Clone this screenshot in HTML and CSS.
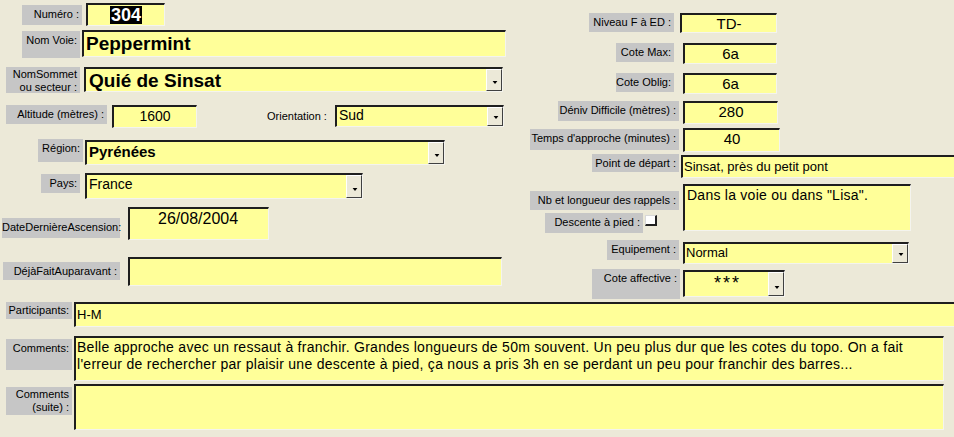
FILE: index.html
```html
<!DOCTYPE html>
<html lang="fr">
<head>
<meta charset="utf-8">
<title>Voie</title>
<link rel="stylesheet" href="styles.css">
</head>
<body>
<div class="form">
  <div class="top">
    <div class="left">
      <div class="row r-num">
        <div class="lab">Numéro :</div>
        <div class="fld center"><span class="sel">304</span></div>
      </div>
      <div class="row r-voie">
        <div class="lab">Nom Voie:</div>
        <div class="fld big">Peppermint</div>
      </div>
      <div class="row r-sommet">
        <div class="lab two">NomSommet<br>ou secteur :</div>
        <div class="fld combo big"><span class="val">Quié de Sinsat</span><span class="dd"></span></div>
      </div>
      <div class="row r-alt">
        <div class="lab">Altitude (mètres) :</div>
        <div class="fld center num">1600</div>
        <div class="plain">Orientation :</div>
        <div class="fld combo med"><span class="val">Sud</span><span class="dd"></span></div>
      </div>
      <div class="row r-reg">
        <div class="lab">Région:</div>
        <div class="fld combo bold15"><span class="val">Pyrénées</span><span class="dd"></span></div>
      </div>
      <div class="row r-pays">
        <div class="lab">Pays:</div>
        <div class="fld combo med"><span class="val">France</span><span class="dd"></span></div>
      </div>
      <div class="row r-date">
        <div class="lab">DateDernièreAscension:</div>
        <div class="fld date">26/08/2004</div>
      </div>
      <div class="row r-deja">
        <div class="lab">DéjàFaitAuparavant :</div>
        <div class="fld"></div>
      </div>
    </div>
    <div class="right">
      <div class="row q-niv">
        <div class="lab">Niveau F à ED :</div>
        <div class="fld center num">TD-</div>
      </div>
      <div class="row q-max">
        <div class="lab">Cote Max:</div>
        <div class="fld center num">6a</div>
      </div>
      <div class="row q-obl">
        <div class="lab">Cote Oblig:</div>
        <div class="fld center num">6a</div>
      </div>
      <div class="row q-den">
        <div class="lab">Déniv Difficile (mètres) :</div>
        <div class="fld center num">280</div>
      </div>
      <div class="row q-tps">
        <div class="lab">Temps d'approche (minutes) :</div>
        <div class="fld center num">40</div>
      </div>
      <div class="row q-pt">
        <div class="lab">Point de départ :</div>
        <div class="fld small">Sinsat, près du petit pont</div>
      </div>
      <div class="row q-rap">
        <div class="rap-side">
          <div class="lab rap-lab">Nb et longueur des rappels :</div>
          <div class="desc">
            <div class="lab">Descente à pied :</div>
            <span class="chk"></span>
          </div>
        </div>
        <div class="fld med rap">Dans la voie ou dans "Lisa".</div>
      </div>
      <div class="row q-equ">
        <div class="lab">Equipement :</div>
        <div class="fld combo small"><span class="val">Normal</span><span class="dd"></span></div>
      </div>
      <div class="row q-aff">
        <div class="lab">Cote affective :</div>
        <div class="fld combo small"><span class="val stars">***</span><span class="dd"></span></div>
      </div>
    </div>
  </div>
  <div class="bottom">
    <div class="row b-part">
      <div class="lab">Participants:</div>
      <div class="fld small">H-M</div>
    </div>
    <div class="row b-com">
      <div class="lab">Comments:</div>
      <div class="fld memo">Belle approche avec un ressaut à franchir. Grandes longueurs de 50m souvent. Un peu plus dur que les cotes du topo. On a fait<br>l'erreur de rechercher par plaisir une descente à pied, ça nous a pris 3h en se perdant un peu pour franchir des barres...</div>
    </div>
    <div class="row b-suite">
      <div class="lab two">Comments<br>(suite) :</div>
      <div class="fld"></div>
    </div>
  </div>
</div>
</body>
</html>
```

FILE: styles.css
```css
html, body {
  margin: 0;
  padding: 0;
  background: #ece9d8;
  overflow: hidden;
}
.form {
  width: 954px;
  height: 437px;
  font-family: "Liberation Sans", Arial, sans-serif;
  color: #000;
}
.top {
  display: flex;
  height: 297px;
}
.left {
  width: 520px;
  flex: none;
}
.right {
  flex: 1;
}
.row {
  display: flex;
  align-items: flex-start;
}
.lab {
  flex: none;
  box-sizing: border-box;
  background: #c6c6c6;
  font-size: 11px;
  line-height: 13px;
  text-align: right;
  padding: 3px 3px 0 0;
  white-space: nowrap;
}
.lab.two {
  padding-top: 1px;
}
.plain {
  font-size: 11px;
  line-height: 13px;
  white-space: nowrap;
}
.fld {
  flex: none;
  box-sizing: border-box;
  background: #ffff99;
  border-style: solid;
  border-width: 2px 1px 1px 2px;
  border-color: #1e1e1e #f4f4ee #f4f4ee #1e1e1e;
  padding: 0 2px;
  font-size: 14px;
  line-height: 17px;
  white-space: nowrap;
  overflow: hidden;
}
.center { text-align: center; }
.num { font-size: 15px; line-height: 17px; }
.big { font-size: 19px; font-weight: bold; line-height: 22px; padding-top: 1px; }
.med { font-size: 14px; line-height: 17px; }
.small { font-size: 13px; line-height: 16px; padding-left: 1px; }
.bold15 { font-size: 15px; font-weight: bold; line-height: 18px; }
.combo {
  display: flex;
  padding: 0;
}
.combo .val {
  flex: 1;
  padding-left: 2px;
  overflow: hidden;
}
.dd {
  flex: none;
  width: 16px;
  box-sizing: border-box;
  background: #ece9d8;
  border-style: solid;
  border-width: 1px;
  border-color: #ffffff #404040 #404040 #ffffff;
  position: relative;
  align-self: stretch;
}
.dd::after {
  content: "";
  position: absolute;
  left: 5px;
  bottom: 6px;
  border-style: solid;
  border-width: 3px 3px 0 3px;
  border-color: #000 transparent transparent transparent;
  width: 0;
  height: 0;
  transform: scaleX(0.8);
}
.sel {
  display: inline-block;
  background: #000;
  color: #fff;
  font-weight: bold;
  font-size: 18px;
  line-height: 18px;
  padding: 0 1px;
  margin-top: 1px;
}

/* left column rows */
.r-num { margin-top: 3px; padding-left: 22px; }
.r-num .lab { width: 60px; height: 20px; margin-top: 2px; }
.r-num .fld { width: 79px; height: 23px; margin-left: 4px; }

.r-voie { margin-top: 4px; padding-left: 22px; }
.r-voie .lab { width: 58px; height: 27px; margin-top: 1px; }
.r-voie .fld { width: 424px; height: 27px; margin-left: 2px; }

.r-sommet { margin-top: 9px; padding-left: 6px; }
.r-sommet .lab { width: 74px; height: 26px; }
.r-sommet .fld { width: 419px; height: 25px; margin-left: 4px; padding-top: 0; }
.r-sommet .val { padding-left: 3px; padding-top: 1px; }

.r-alt { margin-top: 12px; padding-left: 6px; }
.r-alt .lab { width: 101px; height: 19px; }
.r-alt .fld.num { width: 85px; height: 23px; margin-left: 5px; font-size: 14px; padding-top: 1px; }
.r-alt .plain { margin-left: 70px; width: 68px; margin-top: 5px; }
.r-alt .combo { width: 169px; height: 22px; margin-left: 0; }

.r-reg { margin-top: 11px; padding-left: 38px; }
.r-reg .lab { width: 45px; height: 23px; }
.r-reg .fld { width: 360px; height: 25px; margin-left: 2px; margin-top: 1px; }
.r-reg .val { padding-top: 1px; }

.r-pays { margin-top: 8px; padding-left: 41px; }
.r-pays .lab { width: 39px; height: 19px; margin-top: 1px; }
.r-pays .fld { width: 278px; height: 26px; margin-left: 5px; }
.r-pays .val { padding-top: 1px; }

.r-date { margin-top: 8px; padding-left: 2px; }
.r-date .lab { width: 118px; height: 20px; margin-top: 11px; }
.date { width: 141px; height: 33px; margin-left: 8px; font-size: 16px; line-height: 18px; padding-left: 28px; padding-top: 1px; }

.r-deja { margin-top: 17px; padding-left: 3px; }
.r-deja .lab { width: 117px; height: 18px; margin-top: 5px; }
.r-deja .fld { width: 374px; height: 29px; margin-left: 8px; }

/* right column rows */
.q-niv { margin-top: 13px; padding-left: 69px; }
.q-niv .lab { width: 85px; height: 19px; }
.q-niv .fld { width: 97px; height: 20px; margin-left: 6px; }

.q-max { margin-top: 10px; padding-left: 96px; }
.q-obl { margin-top: 9px; padding-left: 96px; }
.q-max .lab, .q-obl .lab { width: 58px; height: 19px; }
.q-max .fld, .q-obl .fld { width: 94px; height: 21px; margin-left: 9px; }

.q-den { margin-top: 7px; padding-left: 38px; }
.q-den .lab { width: 121px; height: 20px; }
.q-den .fld { width: 95px; height: 23px; margin-left: 4px; }

.q-tps { margin-top: 4px; padding-left: 10px; }
.q-tps .lab { width: 149px; height: 21px; margin-top: 1px; }
.q-tps .fld { width: 97px; height: 24px; margin-left: 4px; }

.q-pt { margin-top: 2px; padding-left: 72px; }
.q-pt .lab { width: 87px; height: 18px; }
.q-pt .fld { width: 290px; height: 23px; margin-left: 2px; margin-top: 1px; padding-top: 2px; }

.q-rap { margin-top: 6px; }
.rap-side { width: 163px; flex: none; }
.rap-lab { width: 149px; height: 19px; margin-top: 7px; margin-left: 10px; }
.desc { display: flex; align-items: flex-start; margin-top: 3px; margin-left: 25px; }
.desc .lab { width: 98px; height: 20px; }
.chk {
  display: block;
  width: 12px;
  height: 11px;
  box-sizing: border-box;
  margin-top: 2px;
  margin-left: 2px;
  background: #fff;
  border-style: solid;
  border-width: 1px 2px 2px 1px;
  border-color: #d8d8d8 #202020 #202020 #d8d8d8;
}
.rap { width: 228px; height: 47px; padding-top: 1px; letter-spacing: 0.25px; }

.q-equ { margin-top: 7px; padding-left: 87px; }
.q-equ .lab { width: 72px; height: 20px; }
.q-equ .fld { width: 226px; height: 22px; margin-left: 4px; margin-top: 2px; }
.q-equ .val { padding-left: 1px; padding-top: 1px; }

.q-aff { margin-top: 5px; padding-left: 72px; }
.q-aff .lab { width: 88px; height: 30px; }
.q-aff .fld { width: 102px; height: 27px; margin-left: 3px; margin-top: 1px; }
.stars { text-align: center; padding-top: 1px; font-size: 18px; line-height: 20px; letter-spacing: 2px; }

/* bottom rows */
.bottom { padding-left: 6px; margin-top: 5px; }
.bottom .lab { width: 66px; }
.bottom .fld { margin-left: 2px; }
.b-part .lab { height: 17px; padding-top: 2px; }
.b-part .fld { width: 890px; height: 25px; padding-top: 3px; }
.b-com { margin-top: 9px; }
.b-com .lab { height: 31px; margin-top: 3px; }
.b-com .fld { width: 870px; height: 45px; padding-top: 1px; }
.memo { font-size: 14px; line-height: 17px; letter-spacing: 0.27px; padding-left: 1px; }
.b-suite { margin-top: 3px; }
.b-suite .lab { height: 28px; margin-top: 3px; }
.b-suite .fld { width: 870px; height: 46px; }
```
